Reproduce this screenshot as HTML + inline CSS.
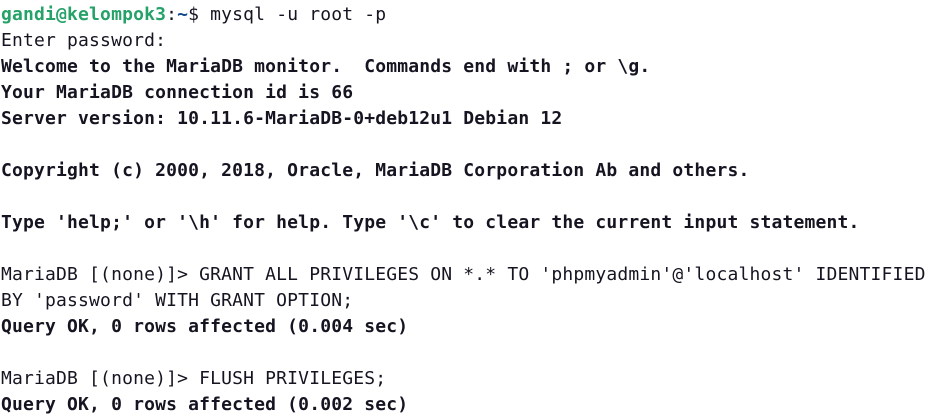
<!DOCTYPE html>
<html><head><meta charset="utf-8"><style>
html,body{margin:0;padding:0;background:#fff;width:940px;height:419px;overflow:hidden}
pre{margin:0;padding:2px 0 0 1px;font-family:"DejaVu Sans Mono","Liberation Mono",monospace;font-size:18px;line-height:26px;letter-spacing:0.17px;color:#171421;white-space:pre}
b{font-weight:bold}
.g{color:#26a269;font-weight:bold}
.bl{color:#12488b;font-weight:bold}
</style></head><body><pre><span class="g">gandi@kelompok3</span>:<span class="bl">~</span>$ mysql -u root -p
Enter password:
<b>Welcome to the MariaDB monitor.  Commands end with ; or \g.</b>
<b>Your MariaDB connection id is 66</b>
<b>Server version: 10.11.6-MariaDB-0+deb12u1 Debian 12</b>

<b>Copyright (c) 2000, 2018, Oracle, MariaDB Corporation Ab and others.</b>

<b>Type 'help;' or '\h' for help. Type '\c' to clear the current input statement.</b>

MariaDB [(none)]&gt; GRANT ALL PRIVILEGES ON *.* TO 'phpmyadmin'@'localhost' IDENTIFIED
BY 'password' WITH GRANT OPTION;
<b>Query OK, 0 rows affected (0.004 sec)</b>

MariaDB [(none)]&gt; FLUSH PRIVILEGES;
<b>Query OK, 0 rows affected (0.002 sec)</b>
</pre></body></html>
